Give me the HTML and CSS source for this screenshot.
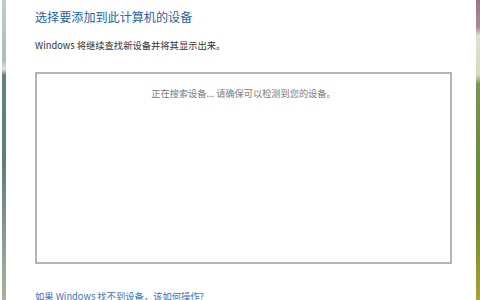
FILE: index.html
```html
<!DOCTYPE html>
<html lang="zh-CN">
<head>
    <meta charset="UTF-8">
    <title>添加设备</title>
    <link rel="stylesheet" href="styles.css">
</head>
<body>
    <div class="frame">
        <div class="edge edge-left"></div>
        <div class="content">
            <h1 class="title">选择要添加到此计算机的设备</h1>
            <p class="hint">Windows 将继续查找新设备并将其显示出来。</p>
            <div class="device-list">
                <p class="searching">正在搜索设备... 请确保可以检测到您的设备。</p>
            </div>
            <a class="help" href="#">如果 Windows 找不到设备，该如何操作?</a>
        </div>
        <div class="edge edge-right"></div>
    </div>
</body>
</html>
```

FILE: styles.css
```css
body {
    margin: 0;
    background-color: #ffffff;
    font-family: "Noto Sans CJK SC", "Noto Sans", sans-serif;
    overflow: hidden;
}

.frame {
    display: flex;
    height: 300px;
}

/* window borders behind the dialog */
.edge {
    width: 4px;
    flex-shrink: 0;
}

.edge-left {
    margin-left: 2px;
    background: linear-gradient(to bottom, #c4ccc9 0%, #aebbb6 20%, #dfe5e2 23%, #62847a 25%, #5f7f76 55%, #8a9c90 80%, #a9b39e 100%);
}

.edge-right {
    background: linear-gradient(to bottom, #9c7584 0%, #a68a93 9%, #dfe3cf 12%, #d2dbbf 25%, #7a9450 28%, #688c3c 55%, #768a2e 75%, #a7a337 100%);
}

.content {
    flex: 1;
    padding: 9px 24px 0 29px;
}

.title {
    margin: 0;
    font-size: 12.1px;
    line-height: 16px;
    font-weight: normal;
    color: #2b62a8;
}

.hint {
    margin: 14px 0 0;
    font-size: 9.3px;
    line-height: 12px;
    color: #333333;
}

.device-list {
    box-sizing: border-box;
    margin-top: 21px;
    height: 192px;
    border: 2px solid #b4b4b4;
    padding-top: 13px;
    text-align: center;
}

.searching {
    margin: 0;
    font-size: 9.2px;
    line-height: 12px;
    color: #7a7a7a;
}

.help {
    display: block;
    margin-top: 26px;
    font-size: 9.3px;
    line-height: 12px;
    color: #3a74c0;
    text-decoration: none;
}
```
